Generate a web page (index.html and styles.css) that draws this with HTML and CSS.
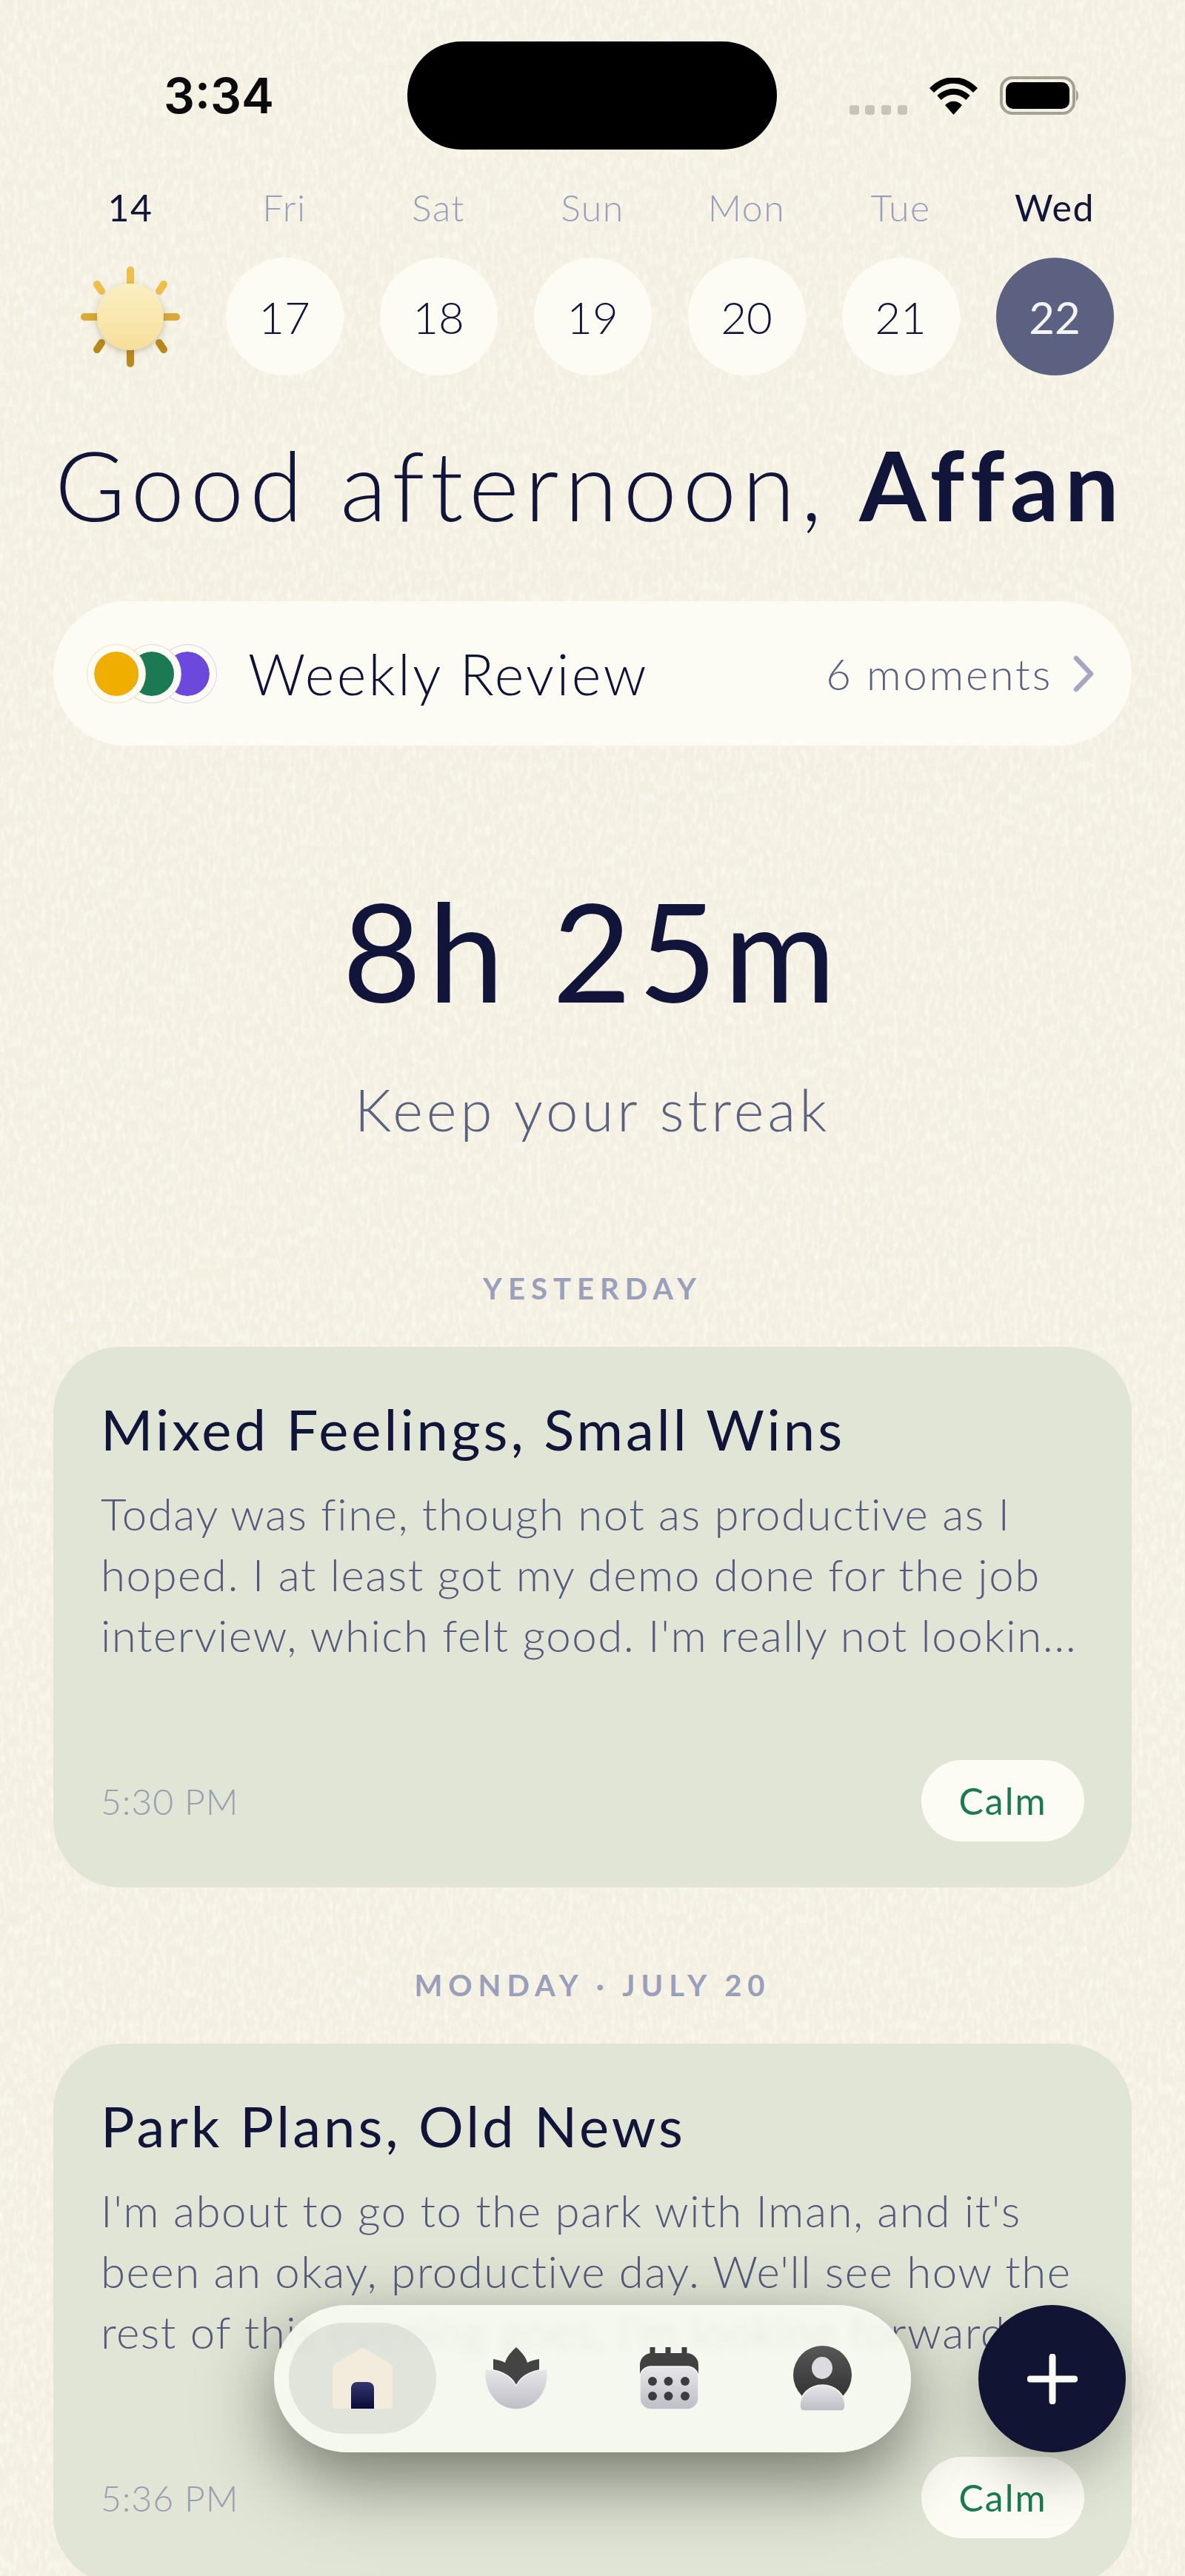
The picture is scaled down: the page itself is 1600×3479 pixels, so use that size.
FILE: index.html
```html
<!DOCTYPE html>
<html lang="en">
  <head>
    <meta charset="UTF-8" />
    <meta name="viewport" content="width=device-width, initial-scale=1.0" />
    <title>Journal Home</title>
    <link rel="stylesheet" href="styles.css">
  </head>
  <body>
    <div class="screen">
      <!-- paper grain -->
      <svg class="grain" width="1600" height="3479">
        <filter id="paper" x="0" y="0" width="100%" height="100%">
          <feTurbulence type="fractalNoise" baseFrequency="0.16 0.07" numOctaves="3" seed="4" />
          <feColorMatrix type="matrix" values="0 0 0 0 1  0 0 0 0 0.99  0 0 0 0 0.95  1.3 0 0 0 -0.52" />
        </filter>
        <rect width="1600" height="3479" filter="url(#paper)" />
      </svg>

      <div class="status-bar">
        <div class="status-time">3:34</div>
        <div class="island"></div>
        <div class="status-icons">
          <svg width="78" height="50" viewBox="0 0 78 50">
            <rect x="0" y="37" width="13" height="13" rx="3.5" fill="#c8c4b6" />
            <rect x="21" y="37" width="13" height="13" rx="3.5" fill="#c8c4b6" />
            <rect x="43" y="37" width="13" height="13" rx="3.5" fill="#c8c4b6" />
            <rect x="65" y="37" width="13" height="13" rx="3.5" fill="#c8c4b6" />
          </svg>
          <svg width="67" height="50" viewBox="0 0 67 50">
            <path d="M4 17 C22 -1 45 -1 63 17" fill="none" stroke="#000" stroke-width="8.5" stroke-linejoin="round" />
            <path d="M14 27 C26 16 41 16 53 27" fill="none" stroke="#000" stroke-width="8" />
            <path d="M22 37 C29 30 38 30 45 37 L33.500 50 Z" fill="#000" />
          </svg>
          <svg width="108" height="52" viewBox="0 0 108 52">
            <rect x="2" y="2" width="98" height="48" rx="15" fill="none" stroke="#a6a293" stroke-width="4" />
            <rect x="8" y="8" width="86" height="36" rx="10" fill="#000" />
            <path d="M103 18 C107 21 107 31 103 34 Z" fill="#a6a293" />
          </svg>
        </div>
      </div>

      <div class="week">
        <div class="day-label is-current">14</div>
        <div class="day-label">Fri</div>
        <div class="day-label">Sat</div>
        <div class="day-label">Sun</div>
        <div class="day-label">Mon</div>
        <div class="day-label">Tue</div>
        <div class="day-label is-current">Wed</div>

        <div class="day-cell">
          <svg width="136" height="136" viewBox="0 0 136 136">
            <defs>
              <linearGradient id="sunBody" x1="0" y1="0" x2="0" y2="1">
                <stop offset="0" stop-color="#fbefc0" />
                <stop offset="1" stop-color="#f7df9b" />
              </linearGradient>
              <filter id="sunShadow" x="-30%" y="-30%" width="160%" height="160%">
                <feDropShadow dx="0" dy="3" stdDeviation="5" flood-color="#6b5a30" flood-opacity="0.35" />
              </filter>
            </defs>
            <g stroke-width="10" stroke-linecap="round" fill="none">
              <path d="M68 5 V26" stroke="#eec04a" />
              <path d="M68 110 V131" stroke="#bb8a1e" />
              <path d="M6 68 H26" stroke="#dba935" />
              <path d="M110 68 H130" stroke="#dba935" />
              <path d="M23 24 L29 33" stroke="#eebf49" />
              <path d="M113 24 L107 33" stroke="#eebf49" />
              <path d="M23 112 L29 103" stroke="#b9881c" />
              <path d="M113 112 L107 103" stroke="#b9881c" />
            </g>
            <circle cx="68" cy="68" r="45" fill="url(#sunBody)" filter="url(#sunShadow)" />
          </svg>
        </div>
        <div class="day-cell"><div class="day-circle">17</div></div>
        <div class="day-cell"><div class="day-circle">18</div></div>
        <div class="day-cell"><div class="day-circle">19</div></div>
        <div class="day-cell"><div class="day-circle">20</div></div>
        <div class="day-cell"><div class="day-circle">21</div></div>
        <div class="day-cell"><div class="day-circle is-today">22</div></div>
      </div>

      <h1 class="greeting">Good afternoon, <strong>Affan</strong></h1>

      <div class="review-pill">
        <div class="review-dots">
          <span class="dot dot-yellow"></span>
          <span class="dot dot-green"></span>
          <span class="dot dot-purple"></span>
        </div>
        <div class="review-title">Weekly Review</div>
        <div class="review-count">6 moments</div>
        <svg class="chevron" width="30" height="50" viewBox="0 0 30 50">
          <path d="M5 4 L25 25 L5 46" fill="none" stroke="#a3a7c0" stroke-width="6.500" stroke-linecap="round" stroke-linejoin="round" />
        </svg>
      </div>

      <div class="streak">
        <div class="streak-time">8h 25m</div>
        <div class="streak-note">Keep your streak</div>
      </div>

      <div class="section-label label-first">YESTERDAY</div>
      <div class="entry-card">
        <h2 class="entry-title">Mixed Feelings, Small Wins</h2>
        <p class="entry-text">Today was fine, though not as productive as I<br>hoped. I at least got my demo done for the job<br>interview, which felt good. I'm really not lookin...</p>
        <div class="entry-footer">
          <span class="entry-time">5:30 PM</span>
          <span class="mood-tag">Calm</span>
        </div>
      </div>

      <div class="section-label">MONDAY · JULY 20</div>
      <div class="entry-card">
        <h2 class="entry-title">Park Plans, Old News</h2>
        <p class="entry-text">I'm about to go to the park with Iman, and it's<br>been an okay, productive day. We'll see how the<br>rest of this evening goes, I'm looking forward...</p>
        <div class="entry-footer">
          <span class="entry-time">5:36 PM</span>
          <span class="mood-tag">Calm</span>
        </div>
      </div>

      <div class="tab-bar">
        <div class="tab is-active">
          <svg width="81" height="82" viewBox="0 0 81 82">
            <defs>
              <linearGradient id="door" x1="0" y1="0" x2="0" y2="1">
                <stop offset="0" stop-color="#34376f" />
                <stop offset="1" stop-color="#0a0b35" />
              </linearGradient>
              <linearGradient id="petal" x1="0" y1="0" x2="0" y2="1">
                <stop offset="0" stop-color="#e6e6ea" />
                <stop offset="1" stop-color="#bdbdc5" />
              </linearGradient>
            </defs>
            <path d="M36 2 C38 0 43 0 45 2 L77 21 C80 23 81 25 81 29 V76 C81 80 79 82 75 82 H6 C2 82 0 80 0 76 V29 C0 25 1 23 4 21 Z" fill="#f3ecdc" />
            <path d="M25 82 V55 C25 49 29 46 33 46 H47 C52 46 56 49 56 55 V82 Z" fill="url(#door)" />
          </svg>
        </div>
        <div class="tab">
          <svg width="84" height="84" viewBox="0 0 84 84">
            <path d="M42 0 C52 9 56 16 57 21 C62 18 68 17 73 16 L73 42 L42 54 L11 42 L11 16 C16 17 22 18 27 21 C28 16 32 9 42 0 Z" fill="#444444" />
            <path d="M0 30 C16 30 34 36 42 52 C50 36 68 30 84 30 C87 60 68 84 42 84 C16 84 -3 60 0 30 Z" fill="url(#petal)" stroke="#f4f7ee" stroke-width="1.500" />
          </svg>
        </div>
        <div class="tab">
          <svg width="79" height="84" viewBox="0 0 79 84">
            <path d="M17 0 V12 M38 0 V12 M60 0 V12" stroke="#3f3f3f" stroke-width="7" stroke-linecap="round" />
            <path d="M16 8 H63 C72 8 79 15 79 24 V44 H0 V24 C0 15 7 8 16 8 Z" fill="#414141" />
            <rect x="0" y="26" width="79" height="58" rx="15" fill="url(#petal)" stroke="#f4f7ee" stroke-width="1.500" />
            <g fill="#3c3c40">
              <circle cx="17" cy="46" r="6" /><circle cx="38.500" cy="46" r="6" /><circle cx="61" cy="46" r="6" />
              <circle cx="17" cy="66" r="6" /><circle cx="38.500" cy="66" r="6" /><circle cx="61" cy="66" r="6" />
            </g>
          </svg>
        </div>
        <div class="tab">
          <svg width="79" height="88" viewBox="0 0 79 88">
            <defs>
              <linearGradient id="avatarBack" x1="0" y1="0" x2="0" y2="1">
                <stop offset="0" stop-color="#585858" />
                <stop offset="1" stop-color="#2e2e2e" />
              </linearGradient>
            </defs>
            <circle cx="39.500" cy="39.500" r="39.500" fill="url(#avatarBack)" />
            <ellipse cx="39" cy="30" rx="14" ry="15" fill="#dcdce0" />
            <path d="M9 81 C9 66 22 53 39.500 53 C57 53 70 66 70 81 C70 85 68 88 64 88 H15 C11 88 9 85 9 81 Z" fill="url(#petal)" stroke="#f4f7ee" stroke-width="1.500" />
          </svg>
        </div>
      </div>

      <div class="fab">
        <svg width="68" height="68" viewBox="0 0 68 68">
          <path d="M34 4 V64 M4 34 H64" stroke="#fbfbf6" stroke-width="9" stroke-linecap="round" />
        </svg>
      </div>
    </div>
  </body>
</html>
```

FILE: styles.css
```css
* {
  box-sizing: border-box;
}

html,
body {
  margin: 0;
  padding: 0;
}

body {
  font-family: Lato, "Open Sans", sans-serif;
  color: #12153a;
}

.screen {
  position: relative;
  width: 1600px;
  height: 3479px;
  overflow: hidden;
  padding-top: 56px;
  background-color: #f3efe1;
}

.grain {
  position: absolute;
  top: 0;
  left: 0;
}

/* status bar */
.status-bar {
  position: relative;
  display: flex;
  align-items: center;
  height: 146px;
}

.status-time {
  width: 550px;
  padding-left: 221px;
  font-family: Inter, sans-serif;
  font-size: 66px;
  font-weight: 600;
  color: #0b0b0d;
}

.island {
  width: 499px;
  height: 146px;
  border-radius: 73px;
  background-color: #000;
}

.status-icons {
  display: flex;
  align-items: flex-end;
  gap: 29px;
  margin-left: 98px;
}

/* week strip */
.week {
  position: relative;
  display: grid;
  grid-template-columns: repeat(7, 208px);
  grid-template-rows: 60px 159px;
  row-gap: 38px;
  margin-top: 48px;
  padding: 0 72px;
}

.day-label {
  text-align: center;
  font-size: 50px;
  line-height: 60px;
  font-weight: 300;
  letter-spacing: 1.500px;
  color: #9a9fbc;
}

.day-label.is-current {
  font-weight: 400;
  color: #12153a;
}

.day-cell {
  display: flex;
  justify-content: center;
  align-items: center;
}

.day-circle {
  display: flex;
  justify-content: center;
  align-items: center;
  width: 159px;
  height: 159px;
  border-radius: 50%;
  background-color: #fdfcf4;
  font-size: 60px;
  font-weight: 300;
}

.day-circle.is-today {
  background-color: #5c6182;
  color: #f4f5f2;
  font-weight: 400;
}

.greeting {
  position: relative;
  margin: 77px 0 0 0;
  padding-left: 74px;
  font-size: 130px;
  line-height: 140px;
  font-weight: 300;
  white-space: nowrap;
  letter-spacing: 7.700px;
}

.greeting strong {
  font-weight: 700;
}

/* weekly review */
.review-pill {
  position: relative;
  display: flex;
  align-items: center;
  width: 1456px;
  height: 195px;
  margin: 88px 0 0 72px;
  padding: 0 50px 0 46px;
  border-radius: 98px;
  background-color: #fdfcf4;
}

.review-dots {
  display: flex;
}

.dot {
  position: relative;
  width: 78px;
  height: 78px;
  margin-left: -30px;
  border: 9px solid #fdfcf4;
  border-radius: 50%;
  background-clip: padding-box;
}

.dot-yellow {
  z-index: 3;
  margin-left: 0;
  background-color: #f0ae00;
  box-shadow: 0 0 0 1px #f3e3b5;
}

.dot-green {
  z-index: 2;
  background-color: #1b7a54;
  box-shadow: 0 0 0 1px #cfdcd4;
}

.dot-purple {
  z-index: 1;
  background-color: #6c48dc;
  box-shadow: 0 0 0 1px #d6cef2;
}

.review-title {
  margin-left: 43px;
  font-size: 76px;
  font-weight: 300;
  letter-spacing: 3.300px;
  color: #0f1138;
}

.review-count {
  margin-left: auto;
  font-size: 58px;
  font-weight: 300;
  letter-spacing: 2.700px;
  color: #5c6182;
}

.chevron {
  margin-left: 27px;
}

/* streak */
.streak {
  position: relative;
  margin-top: 176px;
  text-align: center;
}

.streak-time {
  font-size: 184px;
  line-height: 200px;
  font-weight: 400;
  letter-spacing: 9px;
  color: #12153a;
}

.streak-note {
  margin-top: 65px;
  font-size: 78px;
  line-height: 100px;
  font-weight: 300;
  letter-spacing: 5px;
  color: #5c6182;
}

/* entries */
.section-label {
  position: relative;
  margin-top: 102px;
  text-align: center;
  font-size: 40px;
  line-height: 60px;
  font-weight: 700;
  letter-spacing: 8px;
  color: #9a9fbc;
}

.section-label.label-first {
  margin-top: 162px;
}

.entry-card {
  position: relative;
  display: flex;
  flex-direction: column;
  width: 1456px;
  height: 730px;
  margin: 49px 0 0 72px;
  padding: 66px 64px 62px 64px;
  border-radius: 90px;
  background-color: #e0e5d6;
}

.entry-title {
  margin: 0;
  font-size: 76px;
  line-height: 90px;
  font-weight: 400;
  letter-spacing: 4px;
  color: #12153a;
}

.entry-text {
  margin: 28px 0 0 0;
  font-size: 60px;
  line-height: 82px;
  font-weight: 300;
  letter-spacing: 1.500px;
  white-space: nowrap;
  color: #555a7c;
}

.entry-footer {
  display: flex;
  justify-content: space-between;
  align-items: center;
  margin-top: auto;
}

.entry-time {
  font-size: 48px;
  font-weight: 300;
  letter-spacing: 1px;
  color: #9a9fb0;
}

.mood-tag {
  display: flex;
  justify-content: center;
  align-items: center;
  width: 220px;
  height: 110px;
  border-radius: 55px;
  background-color: #fdfcf4;
  font-size: 50px;
  font-weight: 400;
  letter-spacing: 2px;
  color: #1a7a50;
}

/* floating nav */
.tab-bar {
  position: absolute;
  left: 370px;
  top: 3113px;
  display: flex;
  gap: 8px;
  width: 860px;
  height: 199px;
  padding: 24px 20px;
  border-radius: 100px;
  background-color: rgba(247, 250, 241, 0.87);
  backdrop-filter: blur(6px);
  box-shadow: 0 36px 100px rgba(40, 45, 35, 0.6);
}

.tab {
  display: flex;
  justify-content: center;
  align-items: center;
  width: 199px;
  height: 150px;
  border-radius: 75px;
}

.tab.is-active {
  background-color: rgba(205, 207, 200, 0.5);
}

.fab {
  position: absolute;
  left: 1321px;
  top: 3113px;
  display: flex;
  justify-content: center;
  align-items: center;
  width: 199px;
  height: 199px;
  border-radius: 50%;
  background-color: #111433;
  box-shadow: 0 30px 70px rgba(45, 50, 40, 0.3);
}
```
